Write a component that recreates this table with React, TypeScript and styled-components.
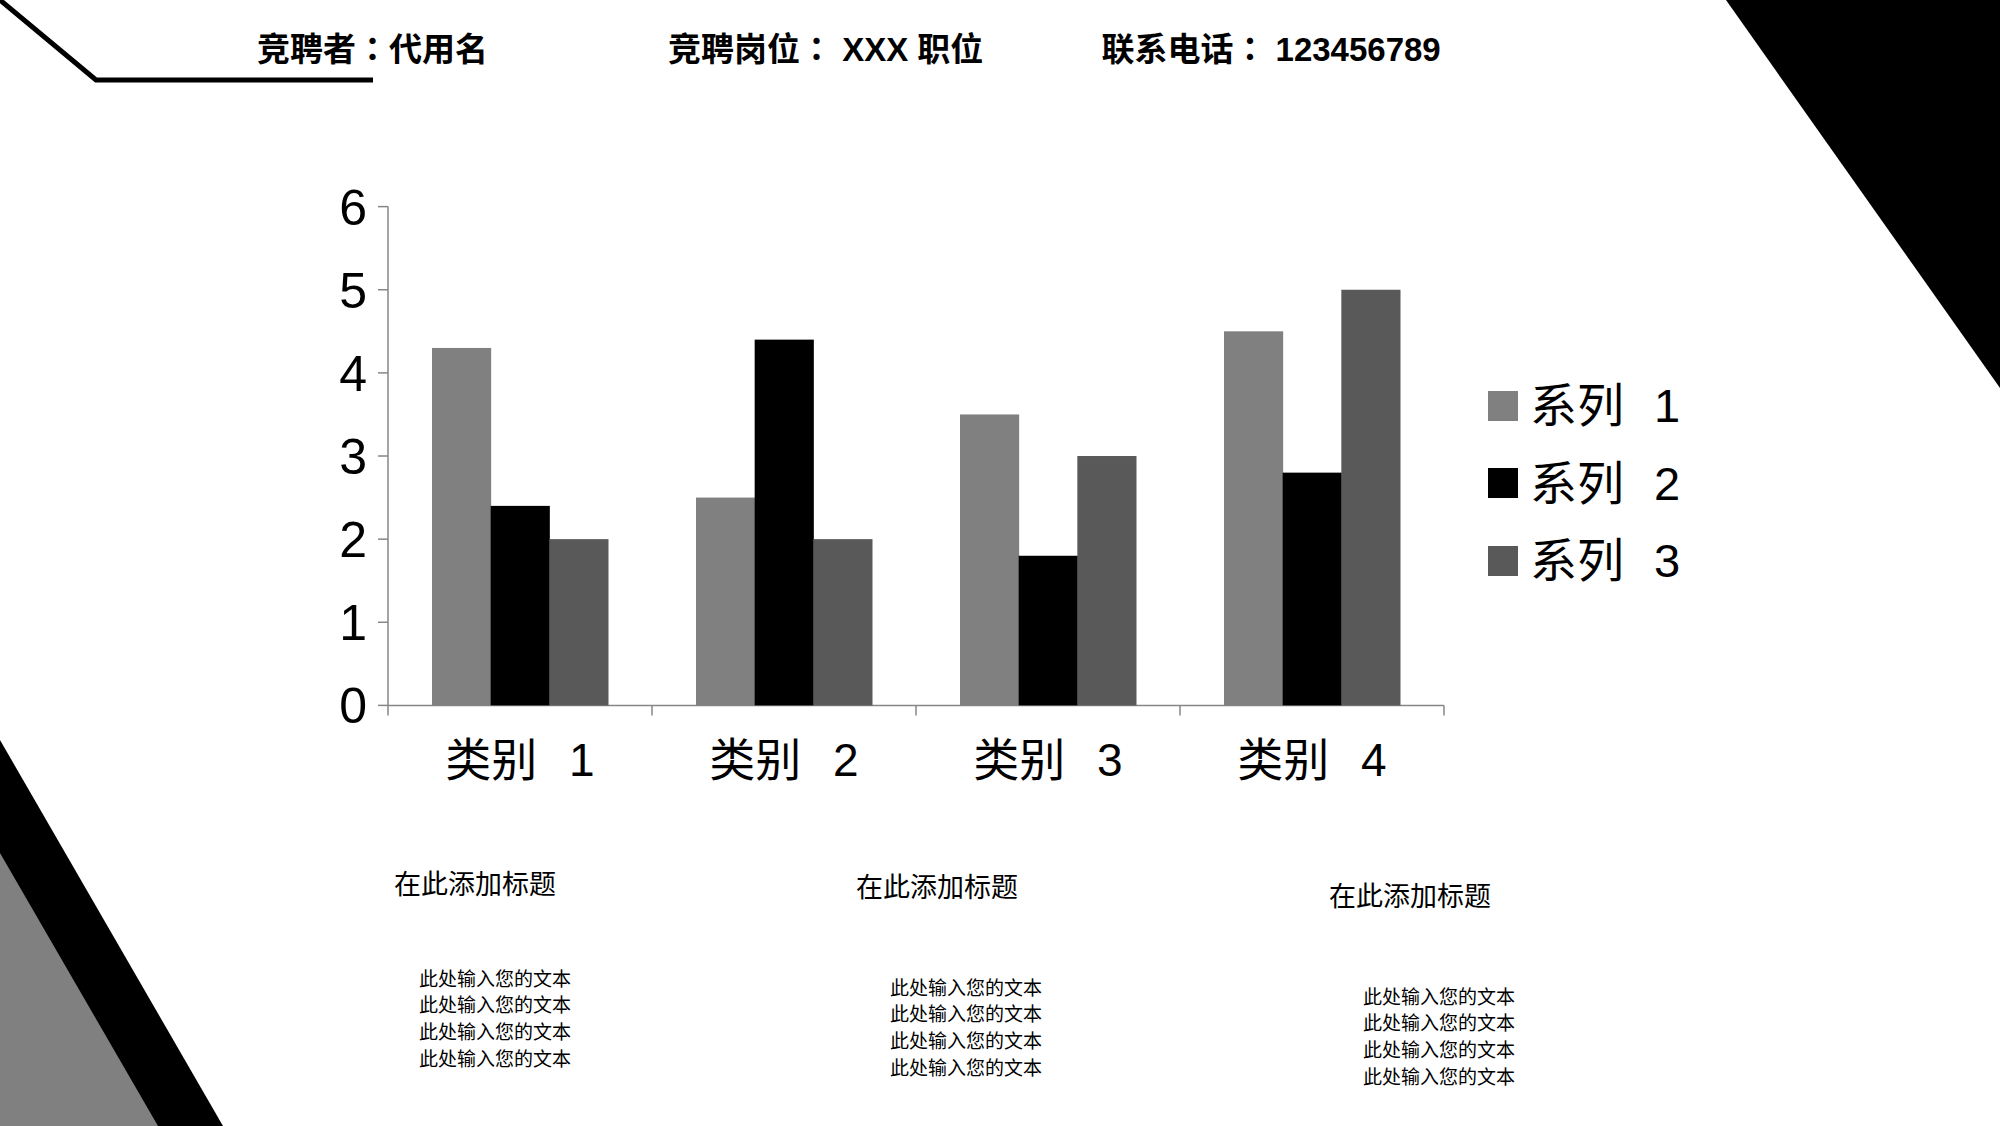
import React from 'react'
import styled, { createGlobalStyle } from 'styled-components'

const GlobalStyle = createGlobalStyle`
  html, body {
    margin: 0;
    padding: 0;
    background: #ffffff;
  }
`

const Page = styled.div`
  position: relative;
  width: 2000px;
  height: 1126px;
  overflow: hidden;
  background: #ffffff;
  font-family: "Liberation Sans", "Noto Sans CJK SC", sans-serif;
  color: #000000;
`

const Decor = styled.svg`
  position: absolute;
  left: 0;
  top: 0;
  pointer-events: none;
`

const Content = styled.div`
  position: relative;
  display: flex;
  flex-direction: column;
`

const Header = styled.div`
  display: flex;
  align-items: center;
  padding: 28px 0 0 257px;
  height: 40px;
`

const HeaderItem = styled.div<{ $gap: number }>`
  margin-left: ${p => p.$gap}px;
  font-size: 33px;
  line-height: 40px;
  font-weight: 700;
  white-space: pre;
`

// centred full-width colon, as the TC face draws it
const Colon = styled.span`
  font-family: "Noto Sans CJK TC", "Noto Sans CJK SC", sans-serif;
`

const ChartSection = styled.div`
  display: flex;
  align-items: flex-start;
  margin-top: 102px;
  padding-left: 300px;
`

const PlotSvg = styled.svg`
  display: block;
  flex: none;
`

const AxisText = styled.text`
  font-family: "Liberation Sans", "Noto Sans CJK SC", sans-serif;
  font-size: 50px;
  fill: #000000;
`

const CatText = styled.text`
  font-family: "Liberation Sans", "Noto Sans CJK SC", sans-serif;
  font-size: 46px;
  fill: #000000;
`

const Legend = styled.div`
  display: flex;
  flex-direction: column;
  margin: 197px 0 0 28px;
`

const LegendRow = styled.div`
  display: flex;
  align-items: center;
  height: 77.5px;
`

const Swatch = styled.span<{ $color: string }>`
  width: 30px;
  height: 30px;
  background: ${p => p.$color};
  margin-right: 12px;
`

const LegendText = styled.span`
  font-size: 47px;
  line-height: 1;
  white-space: pre;
`

const Num = styled.span`
  margin-left: 17px;
`

const Footer = styled.div`
  display: flex;
  align-items: flex-start;
  margin-top: 57px;
  padding-left: 394px;
`

const Block = styled.div<{ $width: number; $top: number }>`
  width: ${p => p.$width}px;
  margin-top: ${p => p.$top}px;
  display: flex;
  flex-direction: column;
`

const BlockTitle = styled.div`
  font-family: "Noto Sans CJK SC", sans-serif;
  font-size: 27px;
  line-height: 32px;
`

const BlockBody = styled.div<{ $indent: number; $gap: number }>`
  margin: ${p => p.$gap}px 0 0 ${p => p.$indent}px;
  font-family: "Noto Sans CJK SC", sans-serif;
  font-size: 19px;
  line-height: 26.7px;
`

const COLORS = ['#808080', '#000000', '#595959']

const CATEGORIES = [
  { n: 1, values: [4.3, 2.4, 2] },
  { n: 2, values: [2.5, 4.4, 2] },
  { n: 3, values: [3.5, 1.8, 3] },
  { n: 4, values: [4.5, 2.8, 5] },
]

// plot geometry, in svg coordinates
const AXIS_X = 88
const Y0 = 535.4
const UNIT = 83.13
const CAT_W = 264
const BAR_W = CAT_W / 4.5

const Chart: React.FC = () => {
  const right = AXIS_X + CAT_W * 4
  return (
    <PlotSvg width={1160} height={640} viewBox="0 0 1160 640">
      <line x1={AXIS_X} y1={Y0 - 6 * UNIT} x2={AXIS_X} y2={Y0 + 10} stroke="#868686" strokeWidth={1.5} />
      <line x1={AXIS_X} y1={Y0} x2={right} y2={Y0} stroke="#868686" strokeWidth={1.5} />
      {[0, 1, 2, 3, 4, 5, 6].map(v => (
        <g key={v}>
          <line x1={AXIS_X - 10} y1={Y0 - v * UNIT} x2={AXIS_X} y2={Y0 - v * UNIT} stroke="#868686" strokeWidth={1.5} />
          <AxisText x={67} y={Y0 - v * UNIT + 1} textAnchor="end" dominantBaseline="central">
            {v}
          </AxisText>
        </g>
      ))}
      {[1, 2, 3, 4].map(i => (
        <line key={i} x1={AXIS_X + i * CAT_W} y1={Y0} x2={AXIS_X + i * CAT_W} y2={Y0 + 10} stroke="#868686" strokeWidth={1.5} />
      ))}
      {CATEGORIES.map((c, ci) => {
        const start = AXIS_X + ci * CAT_W + BAR_W * 0.75
        return (
          <g key={c.n}>
            {c.values.map((v, si) => (
              <rect
                key={si}
                x={start + si * BAR_W}
                y={Y0 - v * UNIT}
                width={BAR_W + 0.5}
                height={v * UNIT}
                fill={COLORS[si]}
              />
            ))}
            <CatText x={AXIS_X + ci * CAT_W + CAT_W / 2} y={590} textAnchor="middle" dominantBaseline="central">
              类别<tspan dx={19}> {c.n}</tspan>
            </CatText>
          </g>
        )
      })}
    </PlotSvg>
  )
}

const BODY_LINES = ['此处输入您的文本', '此处输入您的文本', '此处输入您的文本', '此处输入您的文本']

const BLOCKS = [
  { width: 462, top: 0, indent: 25, gap: 65.6 },
  { width: 473, top: 3, indent: 34, gap: 71.6 },
  { width: 400, top: 12, indent: 34, gap: 71.6 },
]

const App: React.FC = () => {
  return (
    <Page>
      <GlobalStyle />
      <Decor width={2000} height={1126} viewBox="0 0 2000 1126">
        <polyline points="-6,-5 96,80 373,80" fill="none" stroke="#000000" strokeWidth={5} strokeLinejoin="miter" />
        <polygon points="1726,0 2000,0 2000,388" fill="#000000" />
        <polygon points="0,740 223,1126 0,1126" fill="#000000" />
        <polygon points="0,853 158,1126 0,1126" fill="#808080" />
      </Decor>
      <Content>
        <Header>
          <HeaderItem $gap={0}>竞聘者<Colon>：</Colon>代用名</HeaderItem>
          <HeaderItem $gap={180}>竞聘岗位<Colon>：</Colon> XXX 职位</HeaderItem>
          <HeaderItem $gap={118}>联系电话<Colon>：</Colon> 123456789</HeaderItem>
        </Header>
        <ChartSection>
          <Chart />
          <Legend>
            {COLORS.map((c, i) => (
              <LegendRow key={c}>
                <Swatch $color={c} />
                <LegendText>
                  系列 <Num>{i + 1}</Num>
                </LegendText>
              </LegendRow>
            ))}
          </Legend>
        </ChartSection>
        <Footer>
          {BLOCKS.map((b, i) => (
            <Block key={i} $width={b.width} $top={b.top}>
              <BlockTitle>在此添加标题</BlockTitle>
              <BlockBody $indent={b.indent} $gap={b.gap}>
                {BODY_LINES.map((l, j) => (
                  <div key={j}>{l}</div>
                ))}
              </BlockBody>
            </Block>
          ))}
        </Footer>
      </Content>
    </Page>
  )
}

export default App
